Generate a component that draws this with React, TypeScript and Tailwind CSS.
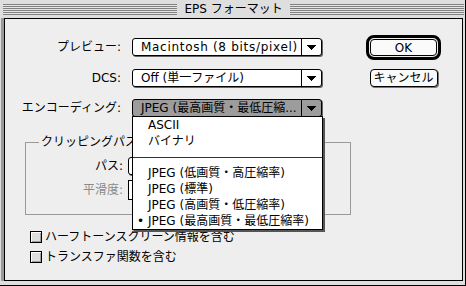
import { ReactNode } from "react";

type PopupProps = {
  text: ReactNode;
  width?: string;
  hilite?: boolean;
};

function Arrow() {
  return (
    <svg width="9" height="5" viewBox="0 0 9 5" shapeRendering="crispEdges">
      <polygon points="0,0 9,0 4.5,5" fill="#000" />
    </svg>
  );
}

function Popup({ text, hilite }: PopupProps) {
  return (
    <div
      className={`flex h-[18px] w-[190px] rounded-[3px] border border-black shadow-[1px_1px_0_#666] ${
        hilite ? "bg-[#9c9c9c]" : "bg-white"
      }`}
    >
      <div className="flex flex-1 items-center overflow-hidden whitespace-nowrap pl-[8px]">
        {text}
      </div>
      <div className="flex w-[20px] items-center justify-center border-l border-black">
        <Arrow />
      </div>
    </div>
  );
}

function Row({ label, text, hilite, className }: { label: string; text: ReactNode; hilite?: boolean; className?: string }) {
  return (
    <div className={`flex items-center ${className ?? ""}`}>
      <div className="w-[116px] whitespace-nowrap text-right">{label}</div>
      <div className="ml-[11px]">
        <Popup text={text} hilite={hilite} />
      </div>
    </div>
  );
}

const items = [
  { t: "ASCII" },
  { t: "バイナリ" },
  { sep: true },
  { t: "JPEG (低画質・高圧縮率)" },
  { t: "JPEG (標準)" },
  { t: "JPEG (高画質・低圧縮率)" },
  { t: "JPEG (最高画質・最低圧縮率)", mark: true },
];

export default function App() {
  return (
    <div className="flex h-[286px] w-[466px] flex-col border-r border-b border-black bg-[#dedede] font-['DejaVu_Sans','Noto_Sans_CJK_JP',sans-serif] text-[12px] leading-none text-black">
      {/* title bar */}
      <div className="flex h-[18px] pl-[3px] pr-[1px]">
        <div className="mt-[4px] h-[11px] flex-1 bg-[repeating-linear-gradient(to_bottom,#808080_0px,#808080_1px,#e6e6e6_1px,#e6e6e6_2px)]" />
        <span className="px-[7px] pt-[3px]">EPS フォーマット</span>
        <div className="mt-[4px] h-[11px] flex-1 bg-[repeating-linear-gradient(to_bottom,#808080_0px,#808080_1px,#e6e6e6_1px,#e6e6e6_2px)]" />
      </div>

      <div className="relative mb-[4px] ml-[4px] mr-[2px] flex-1 border border-black bg-[#eeeeee] shadow-[-3px_0_0_#9a9a9a]">
        <div className="flex">
          <div className="flex flex-col pt-[19px]">
            <Row label="プレビュー:" text={<span className="tracking-[0.7px]">Macintosh (8 bits/pixel)</span>} />
            <Row label="DCS:" text="Off (単一ファイル)" className="mt-[13px]" />
            <Row label="エンコーディング:" text="JPEG (最高画質・最低圧縮..." hilite className="mt-[12px]" />
          </div>
          <div className="ml-[44px] flex w-[75px] flex-col items-center pt-[16px]">
            <div className="flex h-[25px] w-[75px] items-center justify-center rounded-[8px] border-[3px] border-black p-[1px]">
              <div className="flex h-full w-full items-center justify-center rounded-[4px] border border-black bg-[#fafafa]">
                OK
              </div>
            </div>
            <div className="mt-[9px] flex h-[18px] w-[68px] items-center justify-center rounded-[4px] border border-black bg-[#fafafa] shadow-[1px_1px_0_#777]">
              キャンセル
            </div>
          </div>
        </div>

        {/* clipping path group */}
        <div className="relative ml-[20px] mt-[25px] h-[73px] w-[326px] border border-[#999999] pt-[14px]">
          <span className="absolute -top-[7px] left-[13px] bg-[#eeeeee] px-[2px]">クリッピングパス</span>
          <div className="flex items-center">
            <div className="w-[97px] text-right">パス:</div>
            <div className="ml-[5px] h-[18px] w-[180px] rounded-[3px] border border-black bg-white shadow-[1px_1px_0_#666]" />
          </div>
          <div className="mt-[5px] flex items-center">
            <div className="w-[97px] text-right text-[#8a8a8a]">平滑度:</div>
            <div className="ml-[5px] h-[20px] w-[60px] border border-black bg-white" />
          </div>
        </div>

        <div className="ml-[25px] mt-[16px] flex flex-col gap-[8px]">
          <label className="flex h-[12px] items-center">
            <span className="h-[12px] w-[12px] border border-black bg-[#dedede] shadow-[inset_1px_1px_0_#fff,inset_-1px_-1px_0_#a0a0a0]" />
            <span className="ml-[3px]">ハーフトーンスクリーン情報を含む</span>
          </label>
          <label className="flex h-[12px] items-center">
            <span className="h-[12px] w-[12px] border border-black bg-[#dedede] shadow-[inset_1px_1px_0_#fff,inset_-1px_-1px_0_#a0a0a0]" />
            <span className="ml-[3px]">トランスファ関数を含む</span>
          </label>
        </div>

        {/* open menu */}
        <div className="absolute left-[127px] top-[97px] w-[191px] border border-black bg-white shadow-[2px_2px_0_#555]">
          {items.map((it, i) =>
            it.sep ? (
              <div key={i} className="flex h-[16px] items-center">
                <div className="h-px w-full bg-[#333]" />
              </div>
            ) : (
              <div key={i} className="flex h-[16px] items-center whitespace-nowrap">
                <span className="w-[15px] pl-[4px]">{it.mark ? "•" : ""}</span>
                {it.t}
              </div>
            )
          )}
        </div>
      </div>
    </div>
  );
}
